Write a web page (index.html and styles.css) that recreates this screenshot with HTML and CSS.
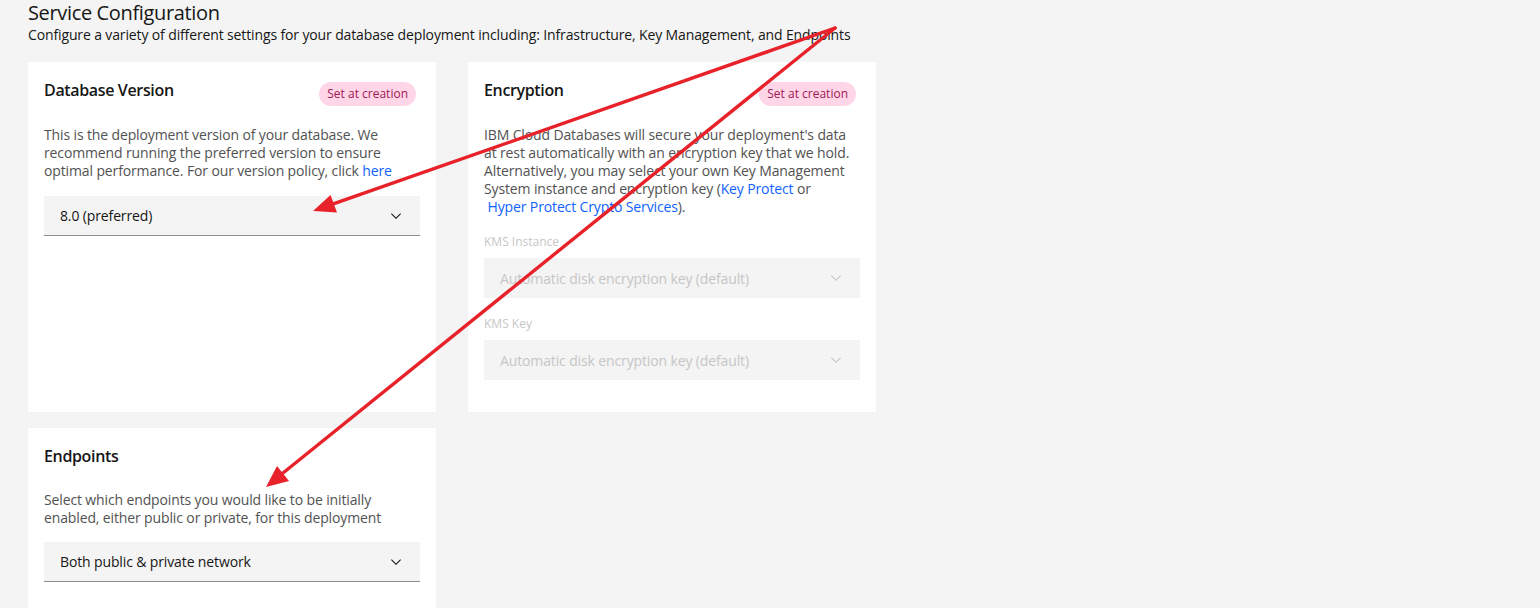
FILE: index.html
```html
<!DOCTYPE html>
<html lang="en">
<head>
<meta charset="utf-8">
<title>Service Configuration</title>
<link rel="stylesheet" href="styles.css">
</head>
<body>
<div class="page">
  <h1 class="title">Service Configuration</h1>
  <p class="subtitle">Configure a variety of different settings for your database deployment including: Infrastructure, Key Management, and Endpoints</p>

  <div class="grid">
    <section class="card">
      <div class="card-head">
        <h2 class="card-title">Database Version</h2>
        <span class="tag">Set at creation</span>
      </div>
      <p class="desc">This is the deployment version of your database. We recommend running the preferred version to ensure optimal performance. For our version policy, click <a href="#" class="link">here</a></p>
      <div class="select">
        <span>8.0 (preferred)</span>
        <svg class="chev" viewBox="0 0 16 16" width="16" height="16"><path d="M8 11L3 6l.7-.7L8 9.6l4.3-4.3.7.7z"/></svg>
      </div>
    </section>

    <section class="card">
      <div class="card-head">
        <h2 class="card-title">Encryption</h2>
        <span class="tag">Set at creation</span>
      </div>
      <p class="desc">IBM Cloud Databases will secure your deployment's data at rest automatically with an encryption key that we hold. Alternatively, you may select your own Key Management System instance and encryption key (<a href="#" class="link">Key Protect</a> or<br>&nbsp;<a href="#" class="link">Hyper Protect Crypto Services</a>).</p>
      <div class="field">
        <label class="label">KMS Instance</label>
        <div class="select disabled">
          <span>Automatic disk encryption key (default)</span>
          <svg class="chev" viewBox="0 0 16 16" width="16" height="16"><path d="M8 11L3 6l.7-.7L8 9.6l4.3-4.3.7.7z"/></svg>
        </div>
      </div>
      <div class="field">
        <label class="label">KMS Key</label>
        <div class="select disabled">
          <span>Automatic disk encryption key (default)</span>
          <svg class="chev" viewBox="0 0 16 16" width="16" height="16"><path d="M8 11L3 6l.7-.7L8 9.6l4.3-4.3.7.7z"/></svg>
        </div>
      </div>
    </section>

    <section class="card card-end">
      <div class="card-head">
        <h2 class="card-title">Endpoints</h2>
      </div>
      <p class="desc">Select which endpoints you would like to be initially enabled, either public or private, for this deployment</p>
      <div class="select">
        <span>Both public &amp; private network</span>
        <svg class="chev" viewBox="0 0 16 16" width="16" height="16"><path d="M8 11L3 6l.7-.7L8 9.6l4.3-4.3.7.7z"/></svg>
      </div>
    </section>
  </div>
</div>

<svg class="annot" width="1540" height="608" viewBox="0 0 1540 608">
  <g stroke="#e8222a" stroke-width="3.4" stroke-linecap="round" fill="none">
    <line x1="835" y1="28" x2="334" y2="203.7"/>
    <line x1="835" y1="28" x2="283" y2="473"/>
  </g>
  <g fill="#e8222a">
    <polygon points="313,211 337,212.5 330.5,195"/>
    <polygon points="266,487 289,481 277,466"/>
  </g>
</svg>
</body>
</html>
```

FILE: styles.css
```css
* { box-sizing: border-box; }

html, body {
  margin: 0;
  padding: 0;
  background: #f4f4f4;
}

body {
  font-family: "Open Sans", "Noto Sans", sans-serif;
  color: #161616;
  position: relative;
  height: 608px;
  overflow: hidden;
  letter-spacing: -0.13px;
}

.page {
  padding: 0 0 0 28px;
}

.title {
  margin: 0;
  font-size: 20px;
  line-height: 26px;
  font-weight: 400;
  color: #161616;
  letter-spacing: -0.35px;
}

.subtitle {
  margin: 0;
  font-size: 14px;
  line-height: 18px;
  color: #161616;
}

.grid {
  margin-top: 18px;
  display: grid;
  grid-template-columns: 408px 408px;
  column-gap: 32px;
  row-gap: 16px;
  align-items: stretch;
}

.card {
  background: #ffffff;
  padding: 16px 16px 32px;
}

.card-head {
  display: flex;
  justify-content: space-between;
  align-items: flex-start;
  min-height: 32px;
}

.card-title {
  margin: 0;
  font-size: 16px;
  line-height: 24px;
  font-weight: 600;
  color: #161616;
  letter-spacing: -0.35px;
}

.tag {
  margin: 4px 4px 0 0;
  height: 24px;
  padding: 0 8px;
  border-radius: 12px;
  background: #ffd6e8;
  color: #9f1853;
  font-size: 12px;
  line-height: 24px;
  letter-spacing: 0;
}

.desc {
  margin: 16px 0 0;
  font-size: 14px;
  line-height: 18px;
  color: #525252;
}

.card-end .desc {
  margin-top: 15px;
}

.card-end .select {
  margin-top: 15px;
}

.link {
  color: #0f62fe;
  text-decoration: none;
}

.select {
  margin-top: 16px;
  height: 40px;
  background: #f4f4f4;
  border-bottom: 1px solid #8d8d8d;
  display: flex;
  align-items: center;
  justify-content: space-between;
  padding: 0 16px;
  font-size: 14px;
  color: #161616;
}

.chev {
  fill: #161616;
  flex: none;
}

.field {
  margin-top: 18px;
}

.label {
  display: block;
  font-size: 12px;
  line-height: 16px;
  color: #c6c6c6;
  margin-bottom: 8px;
  letter-spacing: 0;
}

.field .select {
  margin-top: 0;
}

.select.disabled {
  border-bottom: none;
  color: #c6c6c6;
}

.select.disabled .chev {
  fill: #c6c6c6;
}

.annot {
  position: absolute;
  left: 0;
  top: 0;
  pointer-events: none;
}
```
